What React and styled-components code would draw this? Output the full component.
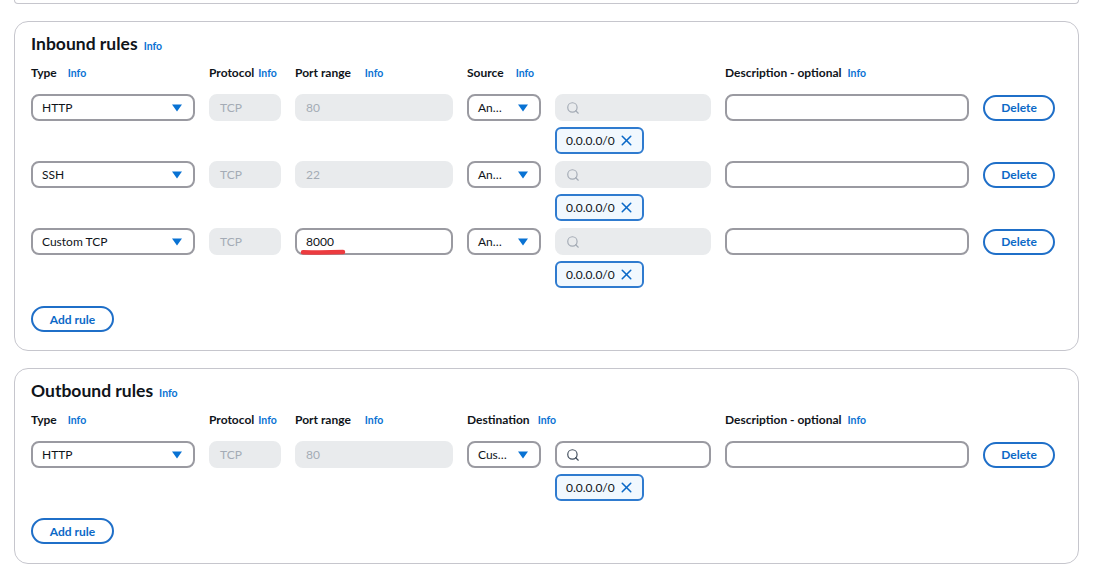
import React from "react";
import styled, { createGlobalStyle } from "styled-components";
import { Search, X } from "lucide-react";

const GlobalStyle = createGlobalStyle`
  body {
    margin: 0;
    background: #ffffff;
    font-family: Lato, "Open Sans", Arial, sans-serif;
    color: #0f141a;
  }
`;

const Page = styled.div`
  width: 1093px;
  padding: 0 14px;
  box-sizing: border-box;
  display: flex;
  flex-direction: column;
  gap: 17px;
`;

const CardStub = styled.div`
  height: 3px;
  border: 1px solid #c6c6cd;
  border-top: none;
  border-radius: 0 0 10px 10px;
`;

const Card = styled.section`
  border: 1px solid #c6c6cd;
  border-radius: 14px;
  padding: ${(p) => p.$pad || "10px 16px 18px 16px"};
  display: flex;
  flex-direction: column;
`;

const Title = styled.h2`
  margin: 0;
  font-size: 17.5px;
  line-height: 24px;
  font-weight: 700;
  display: flex;
  align-items: baseline;
  gap: 6px;
`;

const Info = styled.span`
  color: #0972d3;
  font-size: 10.5px;
  font-weight: 700;
`;

const Grid = styled.div`
  display: grid;
  grid-template-columns: 164px 72px 158px 74px 156px 244px 72px;
  column-gap: 14px;
`;

const HeaderRow = styled(Grid)`
  margin-top: 5px;
  height: 18px;
  align-items: center;
`;

const Header = styled.div`
  display: flex;
  align-items: baseline;
  gap: ${(p) => p.$gap || 8}px;
  font-size: 12px;
  font-weight: 700;
  white-space: nowrap;
  grid-column: ${(p) => p.$span || "auto"};
`;

const Rules = styled.div`
  margin-top: 13px;
  display: flex;
  flex-direction: column;
  gap: 7px;
`;

const RuleBlock = styled(Grid)`
  row-gap: 6px;
  align-items: center;
`;

const Select = styled.div`
  height: 27px;
  box-sizing: border-box;
  border: 2px solid #9a9aa1;
  border-radius: 8px;
  padding: 0 11px 0 9px;
  display: flex;
  align-items: center;
  justify-content: space-between;
  font-size: 12px;
  background: #fff;
`;

const Caret = () => (
  <svg width="10" height="8" viewBox="0 0 10 8">
    <path d="M0 0.5 L10 0.5 L5 7.5 Z" fill="#0972d3" />
  </svg>
);

const Field = styled.div`
  position: relative;
  height: 27px;
  box-sizing: border-box;
  border-radius: 8px;
  border: 2px solid ${(p) => (p.$disabled ? "#e9ebed" : "#9a9aa1")};
  background: ${(p) => (p.$disabled ? "#e9ebed" : "#fff")};
  color: ${(p) => (p.$disabled ? "#a4abb5" : "#0f141a")};
  padding: 0 9px;
  display: flex;
  align-items: center;
  font-size: 12px;
`;

const Mark = styled.svg`
  position: absolute;
  left: 3px;
  top: 19px;
  overflow: visible;
`;

const Chip = styled.div`
  grid-column: 5;
  justify-self: start;
  width: 89px;
  height: 27px;
  box-sizing: border-box;
  border: 2px solid #2f7bcf;
  border-radius: 6px;
  background: #f1f8fe;
  padding: 0 7px 0 9px;
  display: flex;
  align-items: center;
  justify-content: space-between;
  font-size: 12px;
`;

const PillButton = styled.button`
  height: 26px;
  width: ${(p) => p.$w || 72}px;
  box-sizing: border-box;
  border: 2px solid #1f6fc8;
  border-radius: 16px;
  background: #fff;
  color: #0b69c7;
  font-family: inherit;
  font-size: 12px;
  font-weight: 700;
  padding: 0;
  cursor: pointer;
`;

const AddButton = styled(PillButton)`
  margin-top: ${(p) => p.$top}px;
`;

function Rule({ type, port, editablePort, source, searchEnabled, marked }) {
  return (
    <RuleBlock>
      <Select>
        <span>{type}</span>
        <Caret />
      </Select>
      <Field $disabled>TCP</Field>
      <Field $disabled={!editablePort}>
        {port}
        {marked && (
          <Mark width="46" height="6">
            <path d="M3 3.2 Q 22 3.8 43 3" stroke="#ec3b3f" strokeWidth="4.5" strokeLinecap="round" fill="none" />
          </Mark>
        )}
      </Field>
      <Select>
        <span>{source}</span>
        <Caret />
      </Select>
      <Field $disabled={!searchEnabled}>
        <Search size={14} strokeWidth={2} color={searchEnabled ? "#414d5c" : "#a4abb5"} />
      </Field>
      <Field />
      <PillButton>Delete</PillButton>
      <Chip>
        <span>0.0.0.0/0</span>
        <X size={17} strokeWidth={2.2} color="#0b69c7" />
      </Chip>
    </RuleBlock>
  );
}

function Headers({ target, targetGap }) {
  return (
    <HeaderRow>
      <Header $gap={11}>
        Type <Info>Info</Info>
      </Header>
      <Header $gap={4}>
        Protocol <Info>Info</Info>
      </Header>
      <Header $gap={14}>
        Port range <Info>Info</Info>
      </Header>
      <Header $gap={targetGap} $span="span 2">
        {target} <Info>Info</Info>
      </Header>
      <Header $gap={6}>
        Description - optional <Info>Info</Info>
      </Header>
    </HeaderRow>
  );
}

export default function App() {
  return (
    <>
      <GlobalStyle />
      <Page>
        <CardStub />
        <Card>
          <Title>
            Inbound rules <Info>Info</Info>
          </Title>
          <Headers target="Source" targetGap={12} />
          <Rules>
            <Rule type="HTTP" port="80" source="An…" />
            <Rule type="SSH" port="22" source="An…" />
            <Rule type="Custom TCP" port="8000" editablePort marked source="An…" />
          </Rules>
          <AddButton $w={83} $top={18}>
            Add rule
          </AddButton>
        </Card>
        <Card $pad="10px 16px 19px 16px">
          <Title>
            Outbound rules <Info>Info</Info>
          </Title>
          <Headers target="Destination" targetGap={8} />
          <Rules>
            <Rule type="HTTP" port="80" source="Cus…" searchEnabled />
          </Rules>
          <AddButton $w={83} $top={17}>
            Add rule
          </AddButton>
        </Card>
      </Page>
    </>
  );
}
